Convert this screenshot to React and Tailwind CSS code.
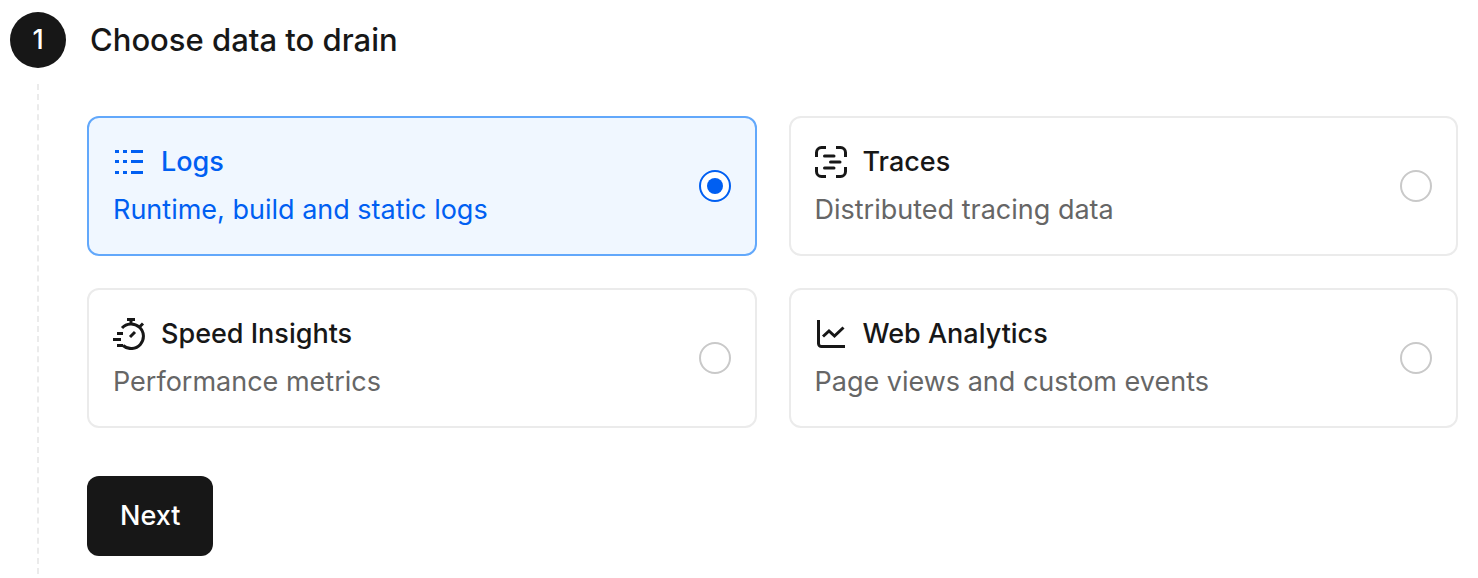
import { useState } from "react";

function LogsIcon() {
  return (
    <svg viewBox="0 0 32 32" className="size-8" fill="currentColor" aria-hidden="true">
      <path d="M2 4h4v3H2zM10 4h4v3h-4zM18 4h12v3H18zM2 14h4v3H2zM10 14h4v3h-4zM18 14h12v3H18zM2 25h4v3H2zM10 25h4v3h-4zM18 25h12v3H18z" />
    </svg>
  );
}

function TracesIcon() {
  return (
    <svg viewBox="0 0 32 32" className="size-8" fill="none" stroke="currentColor" strokeWidth="3" aria-hidden="true">
      <path d="M1.5 11V6.5a5 5 0 0 1 5-5H11M21 1.5h4.5a5 5 0 0 1 5 5V11M30.5 21v4.5a5 5 0 0 1-5 5H21M11 30.5H6.5a5 5 0 0 1-5-5V21" />
      <path strokeLinecap="round" d="M9.5 10h9.5M15.500 16h9.500M9.500 22h9.500" />
    </svg>
  );
}

function SpeedIcon() {
  return (
    <svg viewBox="0 0 32 32" className="size-8" fill="none" stroke="currentColor" strokeWidth="3" aria-hidden="true">
      <path d="M14 1.5h8M18 1.5V6M9 10A12.300 12.300 0 1 1 10 27.5M27 8.5l3-3M17 19l5-5M4 15.5h6M0 21.5h8M4 27.5h6" />
    </svg>
  );
}

function AnalyticsIcon() {
  return (
    <svg viewBox="0 0 32 32" className="size-8" fill="none" stroke="currentColor" strokeWidth="3" aria-hidden="true">
      <path d="M3.5 2v23.5a3 3 0 0 0 3 3H30" />
      <path d="M8 18.500l6-5.500 5.500 5L28.500 9.500" />
    </svg>
  );
}

const options = [
  { id: "logs", title: "Logs", detail: "Runtime, build and static logs", Icon: LogsIcon },
  { id: "traces", title: "Traces", detail: "Distributed tracing data", Icon: TracesIcon },
  { id: "speed", title: "Speed Insights", detail: "Performance metrics", Icon: SpeedIcon },
  { id: "analytics", title: "Web Analytics", detail: "Page views and custom events", Icon: AnalyticsIcon },
];

function OptionCard({ option, checked, onSelect }) {
  const { id, title, detail, Icon } = option;
  return (
    <label
      htmlFor={id}
      className={
        "flex cursor-pointer items-center justify-between gap-4 rounded-xl border-2 p-6 " +
        (checked ? "border-[#62a8fb] bg-[#f0f7ff] text-[#005ff2]" : "border-[#ebebeb] bg-white text-[#171717]")
      }
    >
      <span className="flex flex-col gap-2">
        <span className="flex items-center gap-4 text-[27px] leading-10 font-medium">
          <Icon />
          {title}
        </span>
        <span className={"text-[27px] leading-10 " + (checked ? "" : "text-[#666666]")}>{detail}</span>
      </span>
      <input
        id={id}
        type="radio"
        name="data"
        value={id}
        checked={checked}
        onChange={() => onSelect(id)}
        className="grid size-8 shrink-0 appearance-none place-content-center rounded-full border-2 border-[#c9c9c9] bg-white before:size-4 before:rounded-full checked:border-[#005ff2] checked:before:bg-[#005ff2]"
      />
    </label>
  );
}

export default function App() {
  const [selected, setSelected] = useState("logs");
  return (
    <main className="flex gap-[21px] bg-white pt-3 pr-5 pb-1 pl-[10px] font-['Inter',sans-serif] text-[#171717]">
      <div className="flex shrink-0 flex-col items-center gap-4">
        <span className="flex size-14 items-center justify-center rounded-full bg-[#171717] text-[27px] font-medium text-white">1</span>
        <span className="grow border-l-2 border-dashed border-[#ebebeb]" />
      </div>
      <form className="min-w-0 grow pb-[18px]" onSubmit={(event) => event.preventDefault()}>
        <h2 className="pl-[3px] text-[31px] leading-[56px] font-medium">Choose data to drain</h2>
        <div role="radiogroup" aria-label="Choose data to drain" className="mt-12 grid grid-cols-2 gap-8">
          {options.map((option) => (
            <OptionCard key={option.id} option={option} checked={selected === option.id} onSelect={setSelected} />
          ))}
        </div>
        <button type="submit" className="mt-12 h-20 rounded-xl bg-[#171717] px-[33px] text-[27px] font-medium text-white">
          Next
        </button>
      </form>
    </main>
  );
}
